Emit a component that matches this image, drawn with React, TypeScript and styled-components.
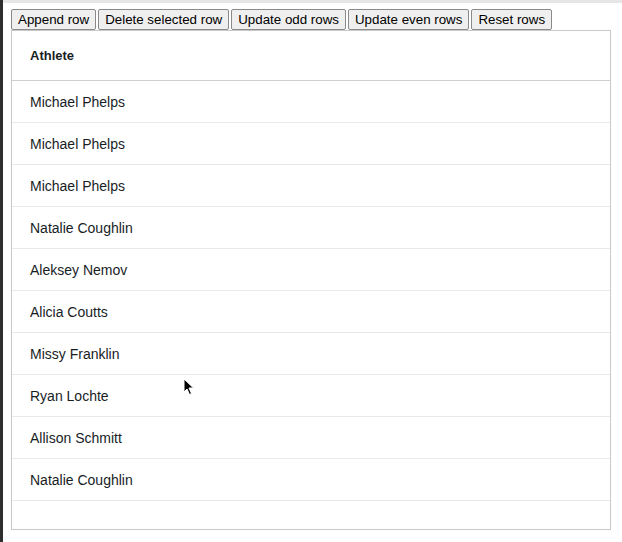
import { createGlobalStyle, styled } from 'styled-components';

const GlobalStyle = createGlobalStyle`
  html, body {
    margin: 0;
    padding: 0;
    background: #ffffff;
  }
  #root {
    min-height: 542px;
  }
`;

const Page = styled.div`
  position: relative;
  min-height: 542px;
  box-sizing: border-box;
  border-left: 3px solid #2e2e2e;
  background: #ffffff;
`;

const TopStrip = styled.div`
  height: 3px;
  background: #e6e6e6;
`;

const Content = styled.div`
  padding: 6px 8px 0 8px;
`;

const Toolbar = styled.div`
  display: flex;
  gap: 2px;
`;

const Button = styled.button`
  height: 21px;
  padding: 0 6px;
  font-family: 'Liberation Sans', Arial, sans-serif;
  font-size: 13.33px;
  color: #000;
  background: #efefef;
  border: 1px solid #8a8a8a;
  border-radius: 2px;
  cursor: default;
`;

const Grid = styled.div`
  width: 600px;
  height: 500px;
  box-sizing: border-box;
  border: 1px solid #c9c9c9;
  display: flex;
  flex-direction: column;
  font-family: 'Liberation Sans', Arial, sans-serif;
  color: #181d1f;
`;

const Header = styled.div`
  height: 49px;
  flex: none;
  display: flex;
  align-items: center;
  padding-left: 18px;
  border-bottom: 1px solid #cfcfcf;
  font-size: 13px;
  font-weight: 700;
`;

const Row = styled.div`
  height: 41px;
  flex: none;
  display: flex;
  align-items: center;
  padding-left: 18px;
  border-bottom: 1px solid #e9e9e9;
  font-size: 14px;
`;

const Cursor = styled.svg`
  position: absolute;
  left: 180px;
  top: 378px;
`;

const athletes = [
  'Michael Phelps',
  'Michael Phelps',
  'Michael Phelps',
  'Natalie Coughlin',
  'Aleksey Nemov',
  'Alicia Coutts',
  'Missy Franklin',
  'Ryan Lochte',
  'Allison Schmitt',
  'Natalie Coughlin',
];

const buttons = ['Append row', 'Delete selected row', 'Update odd rows', 'Update even rows', 'Reset rows'];

export default function App() {
  return (
    <Page>
      <GlobalStyle />
      <TopStrip />
      <Content>
        <Toolbar>
          {buttons.map((b) => (
            <Button key={b}>{b}</Button>
          ))}
        </Toolbar>
        <Grid>
          <Header>Athlete</Header>
          {athletes.map((a, i) => (
            <Row key={i}>{a}</Row>
          ))}
        </Grid>
      </Content>
      <Cursor width="12" height="18" viewBox="0 0 12 18">
        <path d="M1 1 L1 14 L4 11 L6.5 16.5 L8.5 15.5 L6 10 L10.5 10 Z" fill="#000" stroke="#fff" strokeWidth="1" />
      </Cursor>
    </Page>
  );
}
